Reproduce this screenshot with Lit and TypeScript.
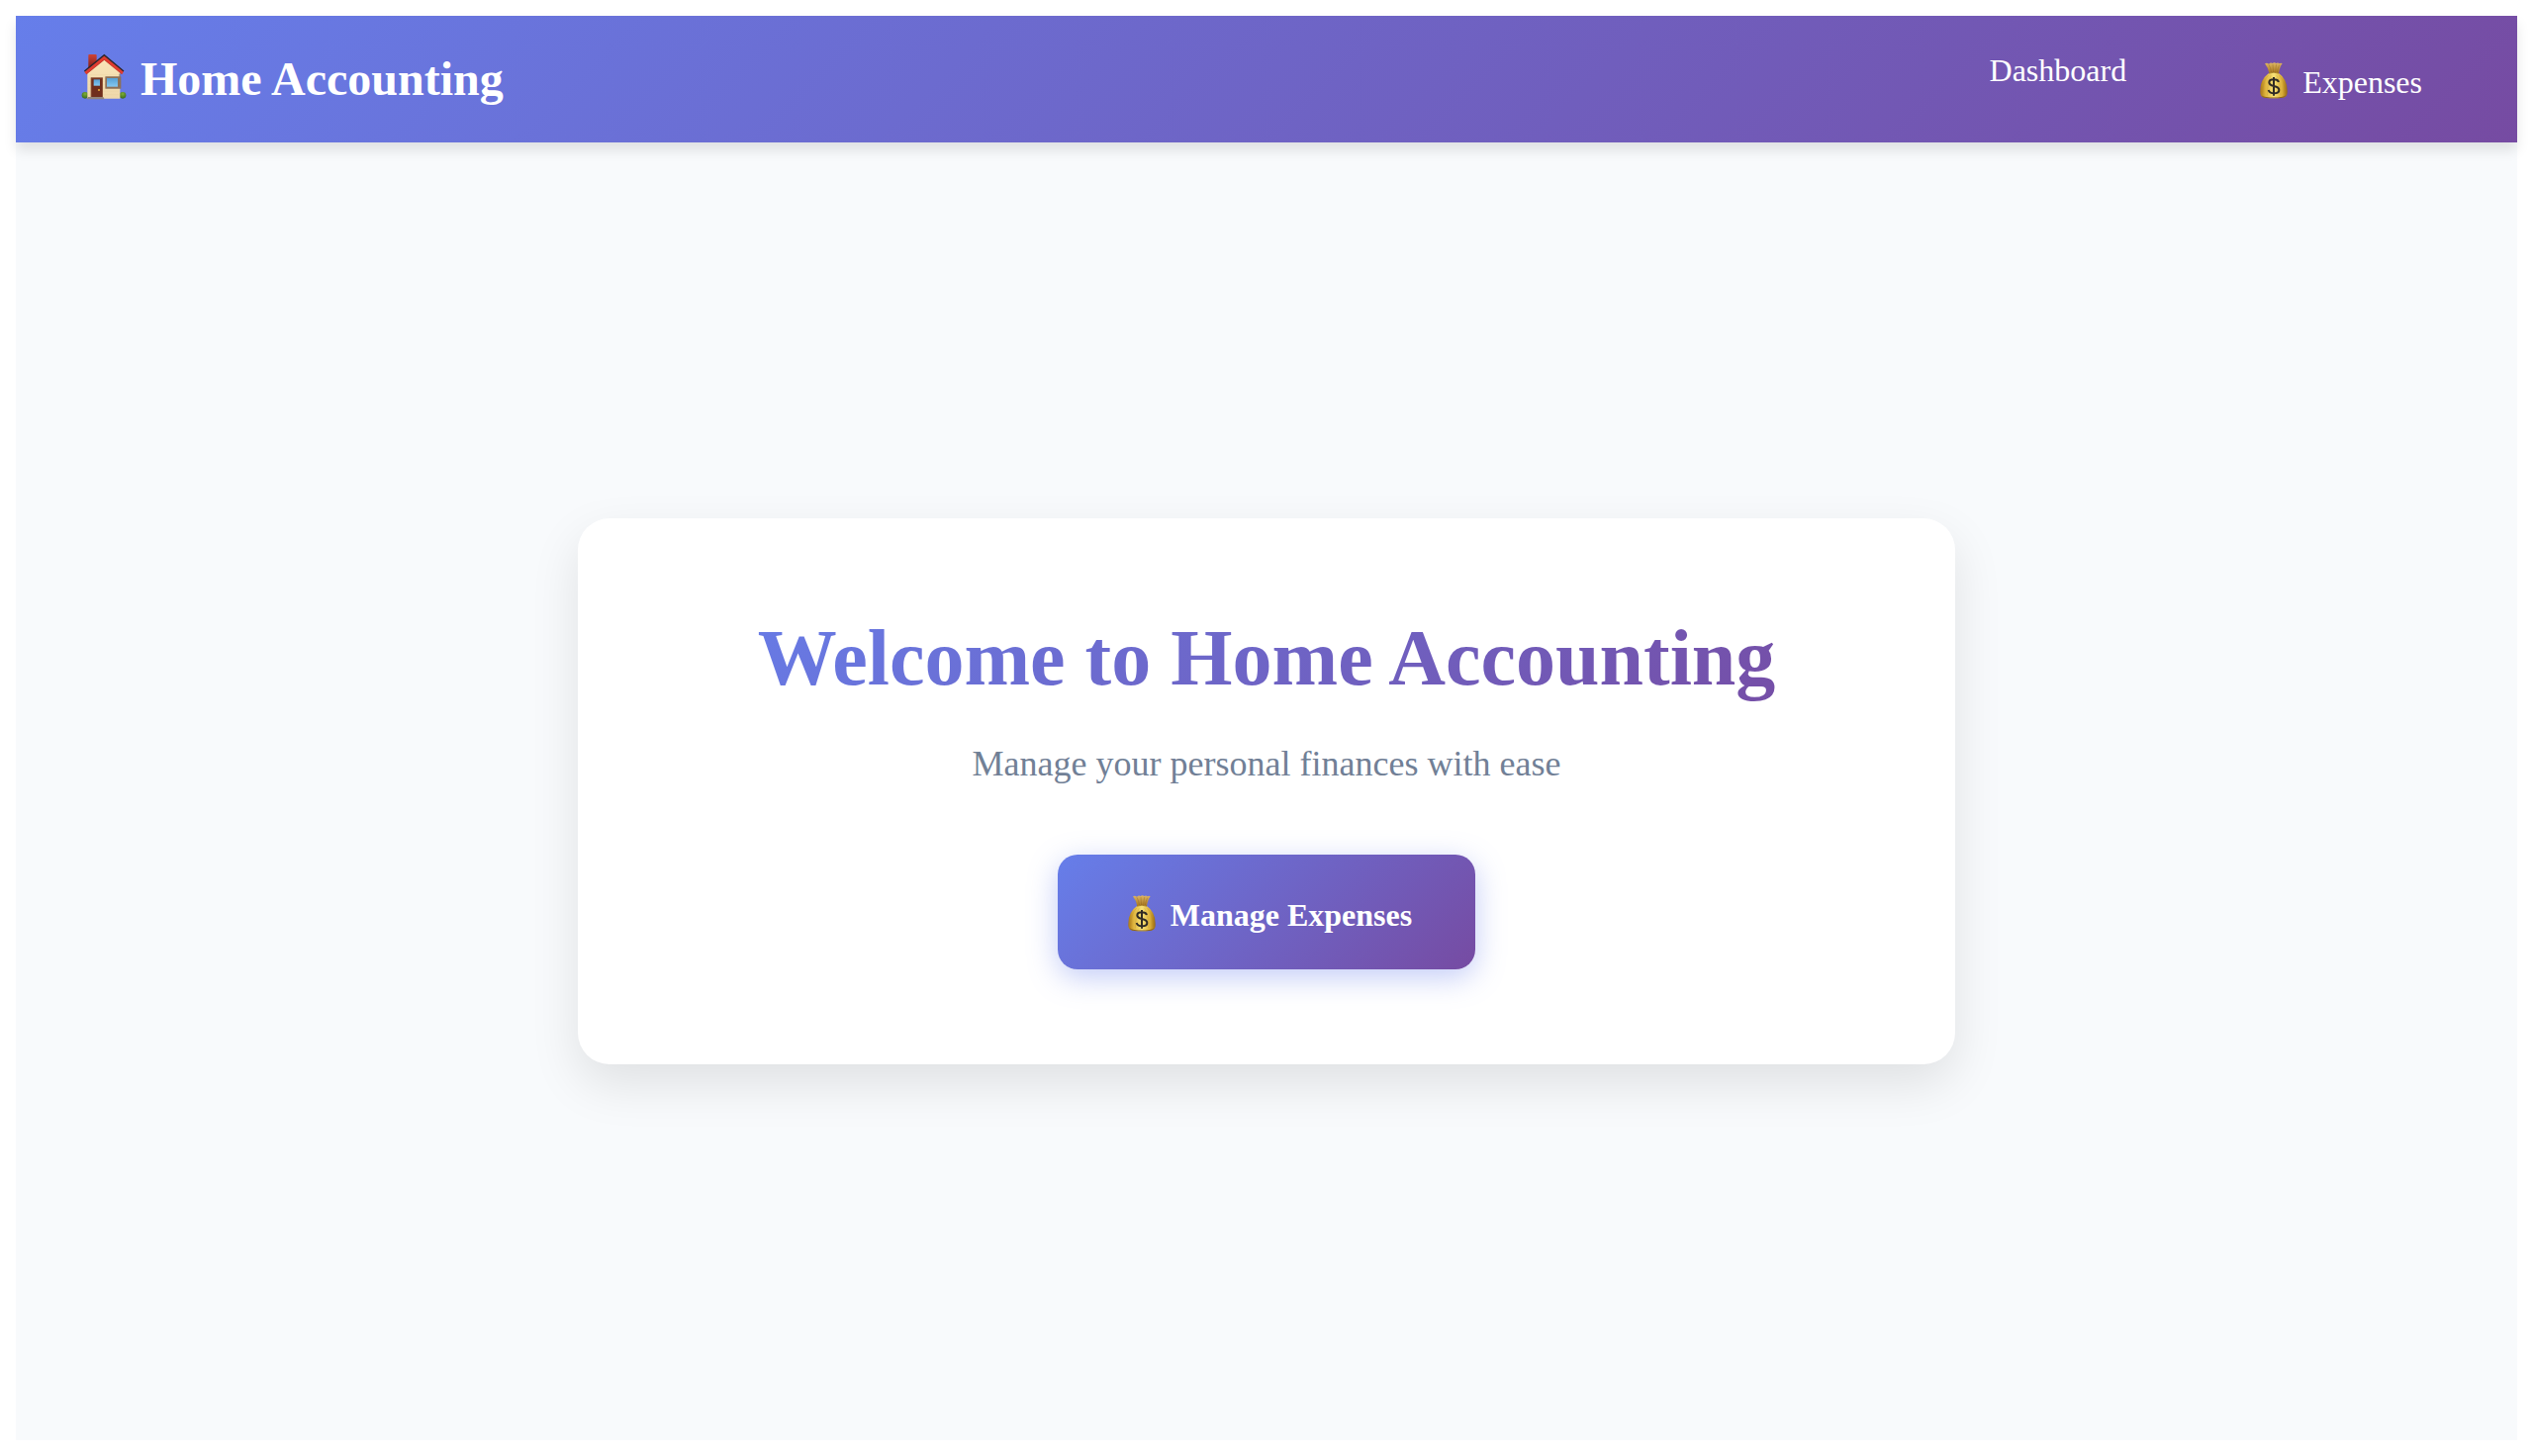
import { LitElement, html, css, svg } from "lit";
import { customElement } from "lit/decorators.js";

const houseIcon = svg`
  <svg class="icon icon-house" viewBox="31 40 150 150" aria-hidden="true">
    <defs>
      <linearGradient id="wall" x1="0" y1="0" x2="0" y2="1">
        <stop offset="0" stop-color="#f9e5b8" />
        <stop offset="1" stop-color="#efd8aa" />
      </linearGradient>
      <linearGradient id="chimney" x1="0" y1="0" x2="0" y2="1">
        <stop offset="0" stop-color="#cf4334" />
        <stop offset="1" stop-color="#7d1c18" />
      </linearGradient>
      <linearGradient id="glass" x1="0" y1="0" x2="0" y2="1">
        <stop offset="0" stop-color="#559fd4" />
        <stop offset="1" stop-color="#84c8f0" />
      </linearGradient>
      <radialGradient id="bush" cx="0.5" cy="0.3" r="0.7">
        <stop offset="0" stop-color="#7fae35" />
        <stop offset="1" stop-color="#37691c" />
      </radialGradient>
    </defs>
    <path d="M59 48q0-2 3-2h18q4 0 4 2v22l-25 18z" fill="url(#chimney)" />
    <circle cx="49" cy="170" r="10" fill="url(#bush)" />
    <circle cx="163" cy="170" r="10" fill="url(#bush)" />
    <path d="M56 96 106 56l49 40v84H56z" fill="url(#wall)" />
    <path d="M60 108h92M60 118h92M60 128h92M60 138h92M60 148h92M60 158h92M60 168h92" stroke="#dec18c" stroke-width="1" opacity="0.5" />
    <path d="M154 105v42" stroke="#453a3c" stroke-width="2" />
    <path d="M47 99 107 49l59 49-5 9-54-44-54 44z" fill="#e03c2f" />
    <path d="M53 106 107 62l53 44" fill="none" stroke="#8f211c" stroke-width="1" />
    <path d="M47 97 107 48l59 49" fill="none" stroke="#2b2529" stroke-width="4" />
    <rect x="66" y="116" width="37" height="60" rx="1" fill="#8a5137" />
    <rect x="69" y="119" width="31" height="57" fill="#6f2e1c" />
    <rect x="75" y="122" width="19" height="19" fill="url(#glass)" />
    <circle cx="91" cy="154" r="3" fill="#f0b33b" />
    <path d="M58 175h46l4 7H54z" fill="#92857a" />
    <rect x="110" y="113" width="48" height="37" rx="1" fill="#8c7058" />
    <rect x="115" y="118" width="33" height="26" fill="url(#glass)" />
  </svg>
`;

const moneyBagIcon = svg`
  <svg class="icon icon-bag" viewBox="24 34 120 120" aria-hidden="true">
    <defs>
      <linearGradient id="bag" x1="0" y1="0" x2="1" y2="0">
        <stop offset="0" stop-color="#a87618" />
        <stop offset="0.2" stop-color="#dfb53e" />
        <stop offset="0.5" stop-color="#f8e277" />
        <stop offset="0.8" stop-color="#dcb13a" />
        <stop offset="1" stop-color="#98680f" />
      </linearGradient>
      <linearGradient id="neck" x1="0" y1="0" x2="0" y2="1">
        <stop offset="0" stop-color="#dfb766" />
        <stop offset="1" stop-color="#a8771d" />
      </linearGradient>
    </defs>
    <path d="M57 44q6-4 12 1 6-6 11-2 6-5 11 0 6-4 10 1 4-3 9 0-8 10-11 29H70Q66 55 57 44z" fill="url(#neck)" />
    <path d="M69 47q6 11 8 24M81 46l2 25M92 46q-2 10-3 25M101 48q-5 10-7 23" fill="none" stroke="#84591a" stroke-width="1" />
    <path d="M69 73q15-6 30 0 26 18 26 53 1 15-7 19-9 4-34 4t-34-4q-8-4-7-19 0-35 26-53z" fill="url(#bag)" />
    <path d="M68 79q-17 17-18 55M76 79q-11 20-12 62M92 79q12 20 13 62M100 79q17 17 18 55" fill="none" stroke="#a97a1c" stroke-width="2" opacity="0.3" />
    <path d="M47 139q3 5 14 6 23 3 46 0 11-1 14-6-1 7-8 8-29 4-58 0-7-1-8-8z" fill="#8d6417" />
    <path d="M70 73q14-5 28 0" fill="none" stroke="#8a6015" stroke-width="2" stroke-linecap="round" />
    <path d="M99 100q-3-8-15-8-14 0-14 9 0 8 14 11 16 3 16 12 0 10-15 10-14 0-17-10M84 85v56" fill="none" stroke="#302b25" stroke-width="6" />
  </svg>
`;

@customElement("app-root")
export class AppRoot extends LitElement {
  static styles = css`
    :host {
      display: block;
      box-sizing: border-box;
      min-height: 100vh;
      padding: 16px;
      background: #ffffff;
      font-family: "Liberation Serif", "Times New Roman", serif;
      --brand: linear-gradient(135deg, #667eea 0%, #764ba2 100%);
    }

    .page {
      display: flex;
      flex-direction: column;
      min-height: calc(100vh - 32px);
      background: #f8fafc;
    }

    .header {
      display: flex;
      align-items: center;
      justify-content: space-between;
      box-sizing: border-box;
      min-height: 128px;
      padding: 0 64px;
      background: var(--brand);
      box-shadow: 0 8px 12px rgba(0, 0, 0, 0.1);
      color: #ffffff;
    }

    .brand {
      margin: 0;
      font-size: 48px;
      line-height: 56px;
      font-weight: 700;
    }

    .nav {
      display: flex;
      align-items: flex-start;
      gap: 64px;
      margin: 0;
      padding: 0 0 6px;
      list-style: none;
    }

    .nav-link {
      display: block;
      padding: 0 32px;
      color: inherit;
      font-size: 32px;
      line-height: 40px;
      text-decoration: none;
    }

    .nav-link-icon {
      padding-top: 12px;
    }

    .icon {
      display: inline-block;
      margin-top: -8px;
      vertical-align: -7px;
    }

    .icon-house {
      width: 50px;
      height: 50px;
    }

    .icon-bag {
      width: 42px;
      height: 40px;
    }

    .main {
      display: flex;
      flex: 1;
      align-items: center;
      justify-content: center;
      padding: 64px;
    }

    .card {
      box-sizing: border-box;
      width: 100%;
      max-width: 1392px;
      padding: 96px;
      border-radius: 32px;
      background: #ffffff;
      box-shadow: 0 20px 50px rgba(0, 0, 0, 0.1);
      text-align: center;
    }

    .title {
      margin: 0 0 40px;
      background: var(--brand);
      -webkit-background-clip: text;
      background-clip: text;
      color: transparent;
      font-size: 80px;
      line-height: 90px;
      font-weight: 700;
    }

    .subtitle {
      margin: 0 0 70px;
      color: #718096;
      font-size: 36px;
      line-height: 44px;
    }

    .action {
      display: inline-block;
      padding: 41px 64px 35px;
      border-radius: 20px;
      background: var(--brand);
      box-shadow: 0 8px 30px rgba(102, 126, 234, 0.4);
      color: #ffffff;
      font-size: 32px;
      line-height: 40px;
      font-weight: 700;
      text-decoration: none;
      vertical-align: top;
    }
  `;

  render() {
    return html`
      <div class="page">
        <header class="header">
          <h2 class="brand">${houseIcon} Home Accounting</h2>
          <nav aria-label="Main">
            <ul class="nav">
              <li><a class="nav-link" href="#dashboard">Dashboard</a></li>
              <li>
                <a class="nav-link nav-link-icon" href="#expenses">${moneyBagIcon} Expenses</a>
              </li>
            </ul>
          </nav>
        </header>
        <main class="main">
          <section class="card">
            <h1 class="title">Welcome to Home Accounting</h1>
            <p class="subtitle">Manage your personal finances with ease</p>
            <a class="action" href="#expenses">${moneyBagIcon} Manage Expenses</a>
          </section>
        </main>
      </div>
    `;
  }
}
